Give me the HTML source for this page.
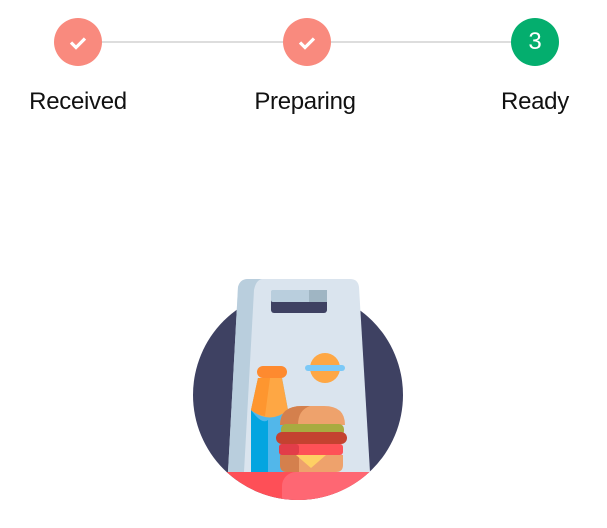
<!DOCTYPE html><html><head><style>
body{margin:0;width:607px;height:528px;background:#fff;font-family:"Liberation Sans",Roboto,sans-serif;position:relative;overflow:hidden}
.c{position:absolute;top:18px;width:48px;height:48px;border-radius:50%;display:flex;align-items:center;justify-content:center;color:#fff;font-size:24px}
.l{position:absolute;top:88px;font-size:24px;color:#111;transform:translateX(-50%);white-space:nowrap;letter-spacing:-0.3px}
.line{position:absolute;top:41px;height:2px;background:#ddd}
</style></head><body>
<div class="line" style="left:78px;width:457px"></div>
<div class="c" style="left:54px;background:#f98a7e"><svg width="24" height="24" viewBox="0 0 24 24"><path d="M5 12.5l5 5 9-9" stroke="#fff" stroke-width="3.2" fill="none"/></svg></div>
<div class="c" style="left:283px;background:#f98a7e"><svg width="24" height="24" viewBox="0 0 24 24"><path d="M5 12.5l5 5 9-9" stroke="#fff" stroke-width="3.2" fill="none"/></svg></div>
<div class="c" style="left:511px;background:#04ae6e">3</div>
<div class="l" style="left:78px">Received</div>
<div class="l" style="left:305px">Preparing</div>
<div class="l" style="left:535px">Ready</div>
<svg style="position:absolute;left:0;top:0" width="607" height="528">
<defs><clipPath id="cp"><rect x="0" y="0" width="607" height="472"/><circle cx="298" cy="395" r="105"/></clipPath></defs>
<circle cx="298" cy="395" r="105" fill="#3e4162"/>
<g clip-path="url(#cp)">
<path d="M248 279H350Q358 279 359 287L370 472H228L238 287Q240 279 248 279Z" fill="#dae4ee"/>
<path d="M248 279H262Q256 280 254 290L244 472H228L238 287Q240 279 248 279Z" fill="#b9cedd"/>
<rect x="271" y="290" width="56" height="23" rx="3" fill="#3e4162"/>
<rect x="271" y="290" width="56" height="12" rx="2" fill="#b9cedd"/>
<rect x="309" y="290" width="18" height="12" fill="#9fb5c3"/>
<circle cx="325" cy="368" r="15" fill="#fea744"/>
<rect x="305" y="365" width="40" height="6" rx="3" fill="#7cc9f7"/>
<path d="M258 378H282L288 410V472H251V410Z" fill="#52b7ea"/>
<path d="M251 410Q262 425 268 420V472H251Z" fill="#03a5e0"/>
<path d="M258 378H282L288 410Q270 425 251 410Z" fill="#fea744"/>
<path d="M258 378H270L265 416Q257 415 251 410Z" fill="#fe962f"/>
<rect x="257" y="366" width="30" height="12" rx="6" fill="#fe8a2f"/>
<path d="M280 425Q280 406 302 406H324Q345 406 345 425Z" fill="#eea26c"/>
<path d="M280 425Q280 406 302 406H310Q298 410 298 425Z" fill="#d4804d"/>
<rect x="281" y="424" width="63" height="12" rx="5" fill="#a8ab40"/>
<rect x="276" y="432" width="71" height="12" rx="6" fill="#c44230"/>
<rect x="279" y="444" width="64" height="11" rx="3" fill="#fe5157"/>
<rect x="279" y="444" width="20" height="11" rx="3" fill="#e23d49"/>
<path d="M280 455H343V465Q343 472 336 472H287Q280 472 280 465Z" fill="#eea26c"/>
<path d="M280 455H299V472H287Q280 472 280 465Z" fill="#d4804d"/>
<path d="M296 455H326L311 468Z" fill="#fed064"/>
<rect x="200" y="472" width="200" height="40" fill="#fe4f57"/>
<rect x="282" y="472" width="130" height="40" rx="14" fill="#fe6773"/>
</g>
</svg>
</body></html>
